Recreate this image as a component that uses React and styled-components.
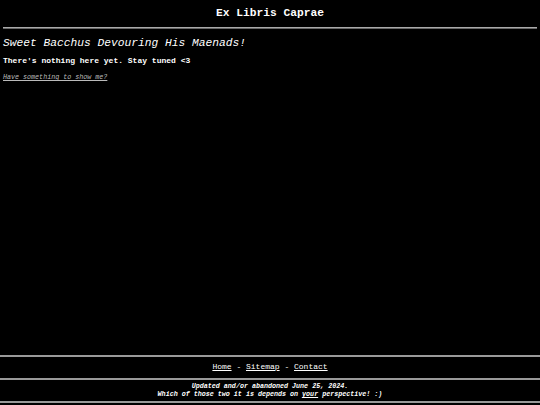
import React from "react";
import styled, { createGlobalStyle } from "styled-components";

const Global = createGlobalStyle`
  html, body { margin: 0; padding: 0; background: #000; color: #fff; }
  body { font-family: "Liberation Mono", "Courier New", monospace; }
  #root { min-height: 100vh; }
`;

const Page = styled.div`
  min-height: 100vh;
  display: flex;
  flex-direction: column;
  box-sizing: border-box;
`;

const Header = styled.header`
  padding: 0 3px;
`;

const Title = styled.h1`
  margin: 0;
  padding-top: 6px;
  font-size: 11.25px;
  line-height: 15px;
  font-weight: bold;
  text-align: center;
`;

const Rule = styled.hr`
  margin: 6px 0 0;
  border: 0;
  border-top: 1px solid #aaa;
  border-bottom: 1px solid #666;
  height: 0;
`;

const Main = styled.main`
  flex: 1;
  padding: 0 3px;
`;

const Heading = styled.h2`
  margin: 7px 0 0;
  font-size: 11.25px;
  line-height: 14px;
  font-style: italic;
  font-weight: normal;
`;

const Text = styled.p`
  margin: 6px 0 0;
  font-size: 8px;
  line-height: 10px;
  font-weight: bold;
`;

const SmallLink = styled.a`
  display: inline-block;
  margin-top: 3px;
  font-size: 6.7px;
  line-height: 9px;
  font-style: italic;
  color: #bbb;
  text-decoration: underline;
`;

const Footer = styled.footer`
  text-align: center;
  padding-bottom: 2px;
`;

const FooterRow = styled.div`
  border-top: 2px solid #999;
  padding: ${(p) => p.$pad};
  font-size: ${(p) => p.$size};
  line-height: ${(p) => p.$lh};
  font-style: ${(p) => (p.$italic ? "italic" : "normal")};
  font-weight: ${(p) => (p.$bold ? "bold" : "normal")};
  border-bottom: ${(p) => (p.$last ? "2px solid #999" : "0")};
`;

const NavLink = styled.a`
  color: #fff;
  text-decoration: underline;
`;

const Em = styled.span`
  text-decoration: underline;
`;

export default function App() {
  return (
    <>
      <Global />
      <Page>
        <Header>
          <Title>Ex Libris Caprae</Title>
          <Rule />
        </Header>
        <Main>
          <Heading>Sweet Bacchus Devouring His Maenads!</Heading>
          <Text>There's nothing here yet. Stay tuned &lt;3</Text>
          <SmallLink href="#">Have something to show me?</SmallLink>
        </Main>
        <Footer>
          <FooterRow $pad="4px 0 6px" $size="8px" $lh="11px">
            <NavLink href="#">Home</NavLink> - <NavLink href="#">Sitemap</NavLink> -{" "}
            <NavLink href="#">Contact</NavLink>
          </FooterRow>
          <FooterRow $pad="2px 0 3px" $size="6.7px" $lh="8px" $italic $bold $last>
            Updated and/or abandoned June 25, 2024.
            <br />
            Which of those two it is depends on <Em>your</Em> perspective! :)
          </FooterRow>
        </Footer>
      </Page>
    </>
  );
}
